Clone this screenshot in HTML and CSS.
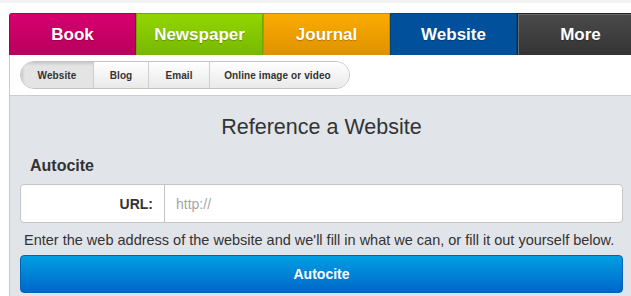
FILE: index.html
```html
<!DOCTYPE html>
<html lang="en">
<head>
  <meta charset="UTF-8" />
  <title>Reference a Website</title>
  <link rel="stylesheet" href="styles.css">
</head>
<body>

  <div class="topbar"></div>

  <div class="wrap">
    <!-- source type tabs -->
    <nav class="tabs">
      <a class="tab book" href="#">Book</a>
      <a class="tab news" href="#">Newspaper</a>
      <a class="tab journal" href="#">Journal</a>
      <a class="tab website active" href="#">Website</a>
      <a class="tab more" href="#">More</a>
    </nav>

    <!-- website sub types -->
    <div class="subnav">
      <div class="pills">
        <a class="pill active" href="#">Website</a>
        <a class="pill" href="#">Blog</a>
        <a class="pill" href="#">Email</a>
        <a class="pill" href="#">Online image or video</a>
      </div>
    </div>

    <main class="panel">
      <h1>Reference a Website</h1>
      <h2>Autocite</h2>

      <div class="field">
        <label for="url">URL:</label>
        <input type="text" id="url" placeholder="http://" />
      </div>
      <p class="help">Enter the web address of the website and we'll fill in what we can, or fill it out yourself below.</p>

      <button class="autocite">Autocite</button>
    </main>
  </div>

</body>
</html>
```

FILE: styles.css
```css
* {
  margin: 0;
  padding: 0;
  box-sizing: border-box;
}

html, body {
  overflow: hidden;
}

body {
  background: #fff;
  font-family: "Liberation Sans", Arial, sans-serif;
  color: #333;
}

.topbar {
  height: 3px;
  background: #f3f3f3;
}

.wrap {
  margin: 10px 0 0 9px;
  width: 624px;
}

/* tabs */
.tabs {
  display: flex;
  height: 42px;
}

.tab {
  flex: none;
  width: 127px;
  display: flex;
  align-items: center;
  justify-content: center;
  color: #fff;
  font-weight: bold;
  font-size: 17px;
  text-decoration: none;
  border: 1px solid transparent;
  border-bottom: none;
  text-shadow: 0 1px 1px rgba(0, 0, 0, 0.25);
}

.book {
  background: linear-gradient(#d6006f, #b9005c);
  border-color: #a8004f;
  border-radius: 3px 0 0 0;
}

.news {
  background: linear-gradient(#92d600, #77b800);
  border-color: #6fa800;
}

.journal {
  background: linear-gradient(#fbab00, #de9200);
  border-color: #cf8800;
}

.website {
  background: #00509c;
  border-color: #00437f;
}

.more {
  background: linear-gradient(#4a4a4a, #343434);
  border-color: #222;
  box-shadow: inset 1px 1px 0 #6a6a6a;
}

/* sub navigation */
.subnav {
  border-left: 1px solid #c9c9c9;
  padding: 6px 0 6px 10px;
  height: 40px;
}

.pills {
  display: inline-flex;
  height: 28px;
  border: 1px solid #c3c3c3;
  border-radius: 14px;
  overflow: hidden;
}

.pill {
  display: flex;
  align-items: center;
  justify-content: center;
  font-size: 10px;
  font-weight: bold;
  letter-spacing: 0.1px;
  color: #333;
  text-decoration: none;
  background: linear-gradient(#ffffff, #e9e9e9);
  border-left: 1px solid #cfcfcf;
}

.pill:nth-child(1) { width: 72px; }
.pill:nth-child(2) { width: 55px; }
.pill:nth-child(3) { width: 61px; }
.pill:nth-child(4) { width: 140px; padding-right: 4px; }

.pill.active {
  border-left: none;
  background: #e4e4e4;
  box-shadow: inset 2px 2px 3px rgba(0, 0, 0, 0.12);
}

/* main panel */
.panel {
  background: #e1e4e9;
  border-top: 1px solid #c9ccd0;
  border-left: 1px solid #c9c9c9;
  padding: 19px 10px 10px 10px;
  height: 210px;
}

h1 {
  text-align: center;
  font-size: 21.5px;
  font-weight: normal;
  line-height: 24px;
  color: #333;
}

h2 {
  margin: 17px 0 0 10px;
  font-size: 16px;
  line-height: 20px;
  color: #333;
}

.field {
  display: flex;
  margin-top: 8px;
  height: 39px;
  background: #fff;
  border: 1px solid #c4c4c4;
  border-radius: 4px;
}

.field label {
  width: 144px;
  display: flex;
  align-items: center;
  justify-content: flex-end;
  padding-right: 11px;
  font-weight: bold;
  font-size: 14px;
  color: #333;
  border-right: 1px solid #c4c4c4;
}

.field input {
  flex: 1;
  border: none;
  background: transparent;
  padding-left: 11px;
  font-family: "Liberation Sans", Arial, sans-serif;
  font-size: 14px;
  color: #333;
  outline: none;
}

.field input::placeholder {
  color: #a6a6a6;
}

.help {
  margin: 8px 0 0 4px;
  font-size: 14.5px;
  line-height: 18px;
  white-space: nowrap;
  color: #333;
}

.autocite {
  display: block;
  width: 100%;
  height: 38px;
  margin-top: 6px;
  border: 1px solid #0062b8;
  border-radius: 4px;
  background: linear-gradient(#009fe3, #0066c9);
  color: #fff;
  font-family: "Liberation Sans", Arial, sans-serif;
  font-weight: bold;
  font-size: 14px;
  cursor: pointer;
}
```
